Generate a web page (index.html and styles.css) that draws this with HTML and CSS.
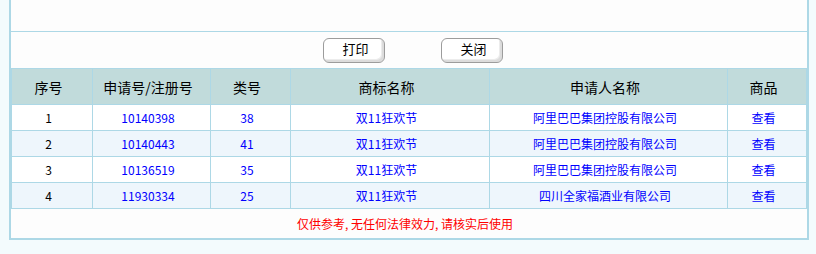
FILE: index.html
```html
<!DOCTYPE html>
<html lang="zh-CN">
<head>
<meta charset="utf-8">
<title>商标查询结果</title>
<link rel="stylesheet" href="styles.css">
</head>
<body>
<div class="panel">
  <div class="top-area"></div>
  <div class="actions">
    <button class="btn" type="button">打印</button>
    <button class="btn" type="button">关闭</button>
  </div>
  <div class="grid">
    <div class="cell head">序号</div>
    <div class="cell head">申请号/注册号</div>
    <div class="cell head">类号</div>
    <div class="cell head">商标名称</div>
    <div class="cell head">申请人名称</div>
    <div class="cell head">商品</div>

    <div class="cell">1</div>
    <div class="cell link">10140398</div>
    <div class="cell link">38</div>
    <div class="cell link">双11狂欢节</div>
    <div class="cell link">阿里巴巴集团控股有限公司</div>
    <div class="cell link">查看</div>

    <div class="cell alt">2</div>
    <div class="cell alt link">10140443</div>
    <div class="cell alt link">41</div>
    <div class="cell alt link">双11狂欢节</div>
    <div class="cell alt link">阿里巴巴集团控股有限公司</div>
    <div class="cell alt link">查看</div>

    <div class="cell">3</div>
    <div class="cell link">10136519</div>
    <div class="cell link">35</div>
    <div class="cell link">双11狂欢节</div>
    <div class="cell link">阿里巴巴集团控股有限公司</div>
    <div class="cell link">查看</div>

    <div class="cell alt">4</div>
    <div class="cell alt link">11930334</div>
    <div class="cell alt link">25</div>
    <div class="cell alt link">双11狂欢节</div>
    <div class="cell alt link">四川全家福酒业有限公司</div>
    <div class="cell alt link">查看</div>
  </div>
  <div class="notice">仅供参考, 无任何法律效力, 请核实后使用</div>
</div>
</body>
</html>
```
FILE: styles.css
```css
html, body {
  margin: 0;
  padding: 0;
  background: #f3fbfd;
  font-family: "Noto Sans CJK SC", "Liberation Sans", sans-serif;
  font-size: 12px;
}

.panel {
  width: 800px;
  margin-left: 9px;
  box-sizing: border-box;
  border: 2px solid #add8e6;
  border-top: none;
  background: #fdfdfd;
}

.top-area {
  height: 31px;
  border-bottom: 1px solid #add8e6;
}

.actions {
  height: 36px;
  display: flex;
  align-items: center;
  justify-content: center;
  gap: 56px;
  padding-left: 7px;
}

.btn {
  width: 62px;
  height: 25px;
  padding: 0 0 2px 4px;
  border: 1px solid #9c9c9c;
  border-radius: 6px;
  background: #ffffff;
  box-shadow: inset -2px -2px 0 #dcdcdc, inset -3px -3px 0 #ececec;
  font-family: "Noto Sans CJK SC", sans-serif;
  font-size: 13px;
  color: #000;
  line-height: 20px;
}

.grid {
  display: grid;
  grid-template-columns: 80px 117px 79px 198px 237px 78px;
  grid-template-rows: 35px;
  grid-auto-rows: 25px;
  gap: 1px;
  background: #add8e6;
  border: 1px solid #add8e6;
}

.cell {
  background: #ffffff;
  display: flex;
  align-items: center;
  justify-content: center;
  padding-right: 7px;
  color: #000;
  white-space: nowrap;
}

.cell.alt {
  background: #eef6fc;
}

.cell.head {
  background: #c1dbdb;
  font-size: 14px;
  color: #000;
}

.cell.link {
  color: #0000ff;
}

.notice {
  height: 29px;
  display: flex;
  align-items: center;
  justify-content: center;
  padding-right: 8px;
  color: #ff0000;
  font-size: 12px;
}
```
